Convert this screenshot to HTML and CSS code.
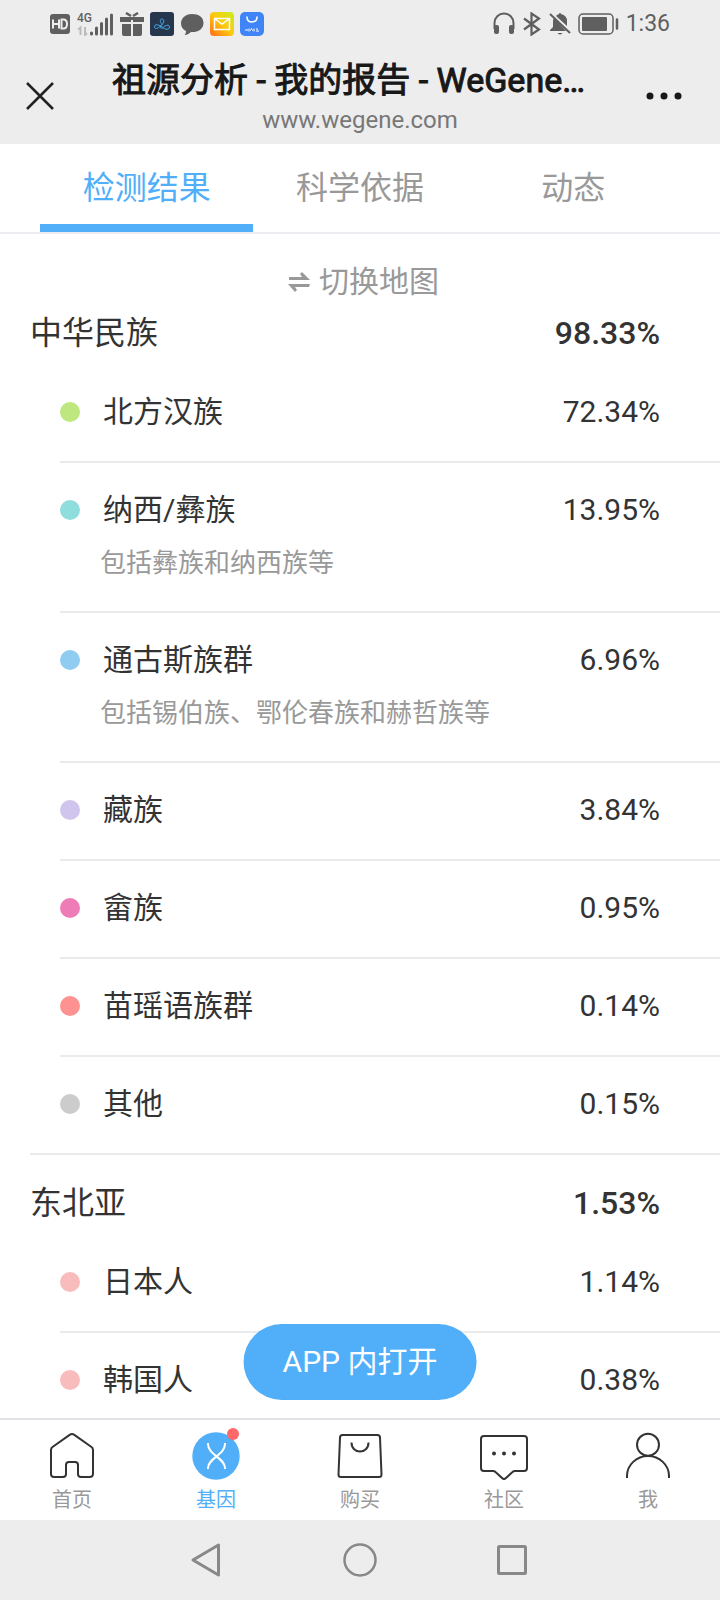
FILE: index.html
```html
<!DOCTYPE html>
<html lang="zh-CN">
<head>
<meta charset="utf-8">
<meta name="viewport" content="width=device-width, initial-scale=1">
<title>祖源分析 - 我的报告 - WeGene</title>
<link rel="stylesheet" href="styles.css">
</head>
<body>
<div class="status">
  <div class="status-left">
    <svg width="22" height="22" viewBox="0 0 22 22"><rect x="1" y="1" width="20" height="20" rx="3" fill="#5f5f5f"/><path d="M4 6.500v9M10 6.500v9M4 11h6M12.500 6.500v9h2q3.500 0 3.500-4.500t-3.500-4.500z" fill="none" stroke="#ededed" stroke-width="2"/></svg>
    <div class="signal">
      <span class="signal-label">4G</span>
      <svg width="37" height="24" viewBox="0 0 37 24"><path d="M1 17.500l2.500-2V23M8 15v8l2-2" fill="none" stroke="#bcbcbc" stroke-width="2"/><path d="M14.500 21v1M19.500 16v6M24.500 11.500v10.500M29.500 7v15M34.500 3v19" stroke="#5f5f5f" stroke-width="3" stroke-linecap="round"/></svg>
    </div>
    <svg width="24" height="24" viewBox="0 0 24 24" fill="#5f5f5f"><path d="M0 5h24v5H13V8h-2v2H0zM2 12h9v12H4q-2 0-2-2zM13 12h9v10q0 2-2 2h-7z"/><path d="M6 1l5 3M18 1l-5 3" stroke="#5f5f5f" stroke-width="2.500"/></svg>
    <svg width="24" height="24" viewBox="0 0 24 24"><rect width="24" height="24" rx="3" fill="#26364d"/><path d="M12 12.500C9 16 5 18 4.500 15s4-3 7.500 0 7.500 3 7.500 0-4-2-7 1c-2 1-3-1-1-3 3-2 3-6 .5-6s-2 3 0 5.500" fill="none" stroke="#4aa5e6" stroke-width="1"/></svg>
    <svg width="24" height="24" viewBox="0 0 24 24"><path d="M12 2C5 2 1 6.500 1 11.500c0 3.500 2 6 5 7.500 0 2-.5 3-1.500 4 3 0 5-1.500 6.500-3C18 20.500 23.500 17 23.500 11S18.500 2 12 2z" fill="#5f5f5f"/></svg>
    <svg width="24" height="24" viewBox="0 0 24 24"><defs><linearGradient id="mail" x1="0" y1="1" x2="1" y2="0"><stop offset="0" stop-color="#ff6a17"/><stop offset=".5" stop-color="#ffc80e"/><stop offset="1" stop-color="#c8ef20"/></linearGradient></defs><rect width="24" height="24" rx="4" fill="url(#mail)"/><path d="M4.500 6.500h15v11h-15zM5 7l7 5 7-5" fill="none" stroke="#fff" stroke-width="1.500"/></svg>
    <svg width="24" height="24" viewBox="0 0 24 24"><rect width="24" height="24" rx="5" fill="#3f85f7"/><path d="M7 5q0 5 5 5t5-5" fill="none" stroke="#fff" stroke-width="1.500" stroke-linecap="round"/><path d="M5 18h3M9 16.500v3M10.500 19l1-2.500 1 2.500M14 19.500v-3M16 17h2M16 19h3" stroke="#fff" stroke-width="1"/></svg>
  </div>
  <div class="status-right">
    <svg width="22" height="24" viewBox="0 0 22 24"><path d="M1.500 17v-6a9.500 9.500 0 0 1 19 0v6" fill="none" stroke="#5f5f5f" stroke-width="2"/><rect x="1" y="13" width="5" height="9" rx="2" fill="#5f5f5f"/><rect x="16" y="13" width="5" height="9" rx="2" fill="#5f5f5f"/></svg>
    <svg width="20" height="24" viewBox="0 0 20 24"><path d="M2 6.500l15 11-7.500 5V1.500l7.500 5-15 11" fill="none" stroke="#5f5f5f" stroke-width="2.200"/></svg>
    <svg width="22" height="24" viewBox="0 0 22 24" fill="#5f5f5f"><path d="M5 6L17 19H1v-1l3-3V9q0-2 1-3zM7 4l1-1q1-.5 2-1 0-1 1-1t1 1q6 1.500 6 7v5z"/><path d="M8.500 21h5q-2.500 3-5 0z"/><path d="M1 2l20 19" stroke="#5f5f5f" stroke-width="2"/></svg>
    <svg width="41" height="24" viewBox="0 0 41 24"><rect x="1" y="2" width="34" height="20" rx="4" fill="none" stroke="#5f5f5f" stroke-width="1.500"/><rect x="4" y="5" width="25" height="14" rx="1" fill="#5f5f5f"/><path d="M39 7.500v9" stroke="#5f5f5f" stroke-width="2.500" stroke-linecap="round"/></svg>
    <time class="clock">1:36</time>
  </div>
</div>
<header class="titlebar">
  <button class="icon-button" aria-label="关闭"><svg width="28" height="28" viewBox="0 0 28 28"><path d="M1 1l26 26M27 1L1 27" stroke="#222" stroke-width="2.500"/></svg></button>
  <div class="titles">
    <h1 class="title">祖源分析 - 我的报告 - WeGene…</h1>
    <p class="url">www.wegene.com</p>
  </div>
  <button class="icon-button" aria-label="更多"><svg width="36" height="28" viewBox="0 0 36 28" fill="#181818"><circle cx="4" cy="14" r="3.500"/><circle cx="18" cy="14" r="3.500"/><circle cx="32" cy="14" r="3.500"/></svg></button>
</header>
<nav class="tabs">
  <a class="tab tab-active" href="#result">检测结果</a>
  <a class="tab" href="#science">科学依据</a>
  <a class="tab" href="#feed">动态</a>
</nav>
<div class="stage">
<main class="content" id="result">
  <button class="switch-map"><svg width="24" height="22" viewBox="0 0 24 22" fill="#999"><path d="M2 6h13l-2-3 2-2 8 8H2zM23 13H1l7 8 2-2-2-3h14z"/></svg>切换地图</button>
  <section class="group">
    <div class="group-head"><h2 class="group-name">中华民族</h2><span class="group-value">98.33%</span></div>
    <ul class="items">
      <li class="item"><div class="row"><i class="dot green"></i><span class="name">北方汉族</span><span class="value">72.34%</span></div></li>
      <li class="item"><div class="row"><i class="dot teal"></i><span class="name">纳西/彝族</span><span class="value">13.95%</span></div><p class="desc">包括彝族和纳西族等</p></li>
      <li class="item"><div class="row"><i class="dot blue"></i><span class="name">通古斯族群</span><span class="value">6.96%</span></div><p class="desc">包括锡伯族、鄂伦春族和赫哲族等</p></li>
      <li class="item"><div class="row"><i class="dot lilac"></i><span class="name">藏族</span><span class="value">3.84%</span></div></li>
      <li class="item"><div class="row"><i class="dot magenta"></i><span class="name">畲族</span><span class="value">0.95%</span></div></li>
      <li class="item"><div class="row"><i class="dot coral"></i><span class="name">苗瑶语族群</span><span class="value">0.14%</span></div></li>
      <li class="item"><div class="row"><i class="dot gray"></i><span class="name">其他</span><span class="value">0.15%</span></div></li>
    </ul>
  </section>
  <section class="group">
    <div class="group-head"><h2 class="group-name">东北亚</h2><span class="group-value">1.53%</span></div>
    <ul class="items">
      <li class="item"><div class="row"><i class="dot pink"></i><span class="name">日本人</span><span class="value">1.14%</span></div></li>
      <li class="item"><div class="row"><i class="dot pink"></i><span class="name">韩国人</span><span class="value">0.38%</span></div></li>
    </ul>
  </section>
</main>
<button class="open-app">APP 内打开</button>
</div>
<nav class="tabbar">
  <a class="tabbar-item" href="#home"><svg width="48" height="48" viewBox="0 0 48 48" fill="none" stroke="#333" stroke-width="2"><path d="M22 2.600q2-1.400 4 0L43.500 15q1.500 1 1.500 3v23.500q0 3.500-3.500 3.500h-8.500q-3 0-3-3V33q0-3-3-3h-6q-3 0-3 3v9q0 3-3 3H6q-3 0-3-3V18q0-2 1.500-3z"/></svg>首页</a>
  <a class="tabbar-item tabbar-active" href="#gene"><span class="badge-wrap"><svg width="48" height="48" viewBox="0 0 48 48"><circle cx="24" cy="24" r="23.700" fill="#50aff8"/><path d="M16 11v1c0 11 17 14 17 24v1M33 11v1c0 11-17 14-17 24v1" fill="none" stroke="#fff" stroke-width="2"/></svg><i class="badge"></i></span>基因</a>
  <a class="tabbar-item" href="#buy"><svg width="48" height="48" viewBox="0 0 48 48" fill="none" stroke="#333" stroke-width="2"><path d="M6.500 3h35q2.500 0 2.500 2.500l1.500 37q0 2.500-2.500 2.500H5q-2.500 0-2.500-2.500l1.500-37Q4 3 6.500 3zM15.500 10.500c0 12 17 12 17 0"/></svg>购买</a>
  <a class="tabbar-item" href="#community"><svg width="48" height="48" viewBox="0 0 48 48" fill="none" stroke="#333" stroke-width="2"><path d="M4 4h40q3 0 3 3v29q0 3-3 3H35q-1.500 0-2.500 1L26 46q-2 2-4 0l-6.500-6q-1-1-2.500-1H4q-3 0-3-3V7q0-3 3-3z"/><g fill="#333" stroke="none"><circle cx="14" cy="21.500" r="2"/><circle cx="24" cy="21.500" r="2"/><circle cx="34" cy="21.500" r="2"/></g></svg>社区</a>
  <a class="tabbar-item" href="#me"><svg width="48" height="48" viewBox="0 0 48 48" fill="none" stroke="#333" stroke-width="2"><circle cx="24" cy="12.700" r="11"/><path d="M3 46v-2a21 20 0 0 1 42 0v2"/></svg>我</a>
</nav>
<div class="sysnav">
  <button class="icon-button" aria-label="返回"><svg width="36" height="36" viewBox="0 0 36 36"><path d="M3 18L28.500 3v30z" fill="none" stroke="#888" stroke-width="3" stroke-linejoin="round"/></svg></button>
  <button class="icon-button" aria-label="主屏幕"><svg width="36" height="36" viewBox="0 0 36 36"><circle cx="18" cy="18" r="15.500" fill="none" stroke="#888" stroke-width="2.500"/></svg></button>
  <button class="icon-button" aria-label="最近任务"><svg width="36" height="36" viewBox="0 0 36 36"><rect x="4.500" y="4.500" width="27" height="27" rx="1" fill="none" stroke="#888" stroke-width="3"/></svg></button>
</div>
</body>
</html>
```
FILE: styles.css
```css
* { box-sizing: border-box; margin: 0; padding: 0; }

body {
  display: flex;
  flex-direction: column;
  height: 100vh;
  background: #fff;
  color: #333;
  font-family: Roboto, "Noto Sans CJK SC", sans-serif;
  font-weight: 400;
}

button { border: 0; background: none; font: inherit; color: inherit; }
a { color: inherit; text-decoration: none; }
ul { list-style: none; }
svg { display: block; flex: none; }

/* Status bar */
.status {
  display: flex;
  justify-content: space-between;
  align-items: center;
  height: 48px;
  padding: 0 50px 0 49px;
  background: #ededed;
  color: #5f5f5f;
}
.status-left { display: flex; align-items: center; gap: 6px; }
.status-right { display: flex; align-items: center; gap: 7px; }
.signal { position: relative; }
.signal-label {
  position: absolute;
  top: -2px;
  left: 0;
  font-size: 12px;
  line-height: 16px;
  font-weight: 500;
}
.clock { font-size: 23px; line-height: 26px; }

/* Title bar */
.titlebar {
  display: flex;
  align-items: center;
  justify-content: space-between;
  gap: 58px;
  height: 96px;
  padding: 0 38px 0 26px;
  background: #ededed;
}
.titlebar .icon-button:last-child { margin-left: -20px; }
.icon-button { display: flex; }
.titles { flex: 1; min-width: 0; color: #181818; }
.title {
  font-size: 34px;
  line-height: 48px;
  font-weight: 400;
  white-space: nowrap;
  -webkit-text-stroke: 1px #181818;
}
.url { font-size: 24px; line-height: 32px; text-align: center; color: #777; }

/* Report tabs */
.tabs {
  display: grid;
  grid-template-columns: repeat(3, 1fr);
  padding: 0 40px;
  border-bottom: 2px solid #ebedf0;
}
.tab {
  height: 88px;
  border-bottom: 8px solid transparent;
  font-size: 32px;
  line-height: 88px;
  text-align: center;
  color: #999;
}
.tab-active { border-color: #50aff8; color: #50aff8; }

/* Composition list */
.stage { position: relative; flex: 1; min-height: 0; }
.content { height: 100%; overflow: auto; scrollbar-width: none; }
.switch-map {
  display: flex;
  align-items: center;
  gap: 8px;
  margin: 33px auto 0;
  padding-left: 6px;
  font-size: 30px;
  line-height: 30px;
  color: #999;
}
.group { margin-left: 30px; }
.group + .group { padding-top: 11px; border-top: 2px solid #ebebeb; }
.group-head {
  display: flex;
  justify-content: space-between;
  padding: 14px 60px 10px 0;
  line-height: 44px;
}
.group + .group .group-head { padding-top: 15px; }
.group-name { font-size: 32px; font-weight: 400; }
.group-value { font-size: 32px; font-weight: 500; }
.items { margin-left: 30px; }
.item { padding: 25px 60px 27px 0; font-size: 30px; }
.item + .item { border-top: 2px solid #ebebeb; }
.row { display: flex; align-items: center; line-height: 44px; }
.dot { width: 20px; height: 20px; border-radius: 50%; }
.name { flex: 1; padding-left: 23px; }
.desc {
  margin: 10px 0 0;
  padding-left: 40px;
  font-size: 26px;
  line-height: 42px;
  color: #999;
}
.green { background: #bee77f; }
.teal { background: #8fdedd; }
.blue { background: #90cbf2; }
.lilac { background: #d0c5ec; }
.magenta { background: #ee7db7; }
.coral { background: #fd9290; }
.gray { background: #ccc; }
.pink { background: #f9bcbc; }

.open-app {
  position: absolute;
  left: 50%;
  bottom: 18px;
  transform: translateX(-50%);
  padding: 0 39px;
  border-radius: 38px;
  background: #50aff8;
  color: #fff;
  font-size: 30px;
  line-height: 76px;
  white-space: nowrap;
}

/* Bottom tab bar */
.tabbar {
  display: grid;
  grid-template-columns: repeat(5, 1fr);
  height: 102px;
  border-top: 2px solid #e1e3e6;
}
.tabbar-item {
  display: flex;
  flex-direction: column;
  align-items: center;
  padding-top: 12px;
  font-size: 20px;
  line-height: 40px;
  color: #999;
}
.tabbar-active { color: #50aff8; }
.badge-wrap { position: relative; }
.badge {
  position: absolute;
  top: -4px;
  right: 1px;
  width: 12px;
  height: 12px;
  border-radius: 50%;
  background: #ff6868;
}

/* System navigation */
.sysnav {
  display: flex;
  align-items: center;
  justify-content: center;
  gap: 116px;
  height: 80px;
  background: #ededed;
}
```
